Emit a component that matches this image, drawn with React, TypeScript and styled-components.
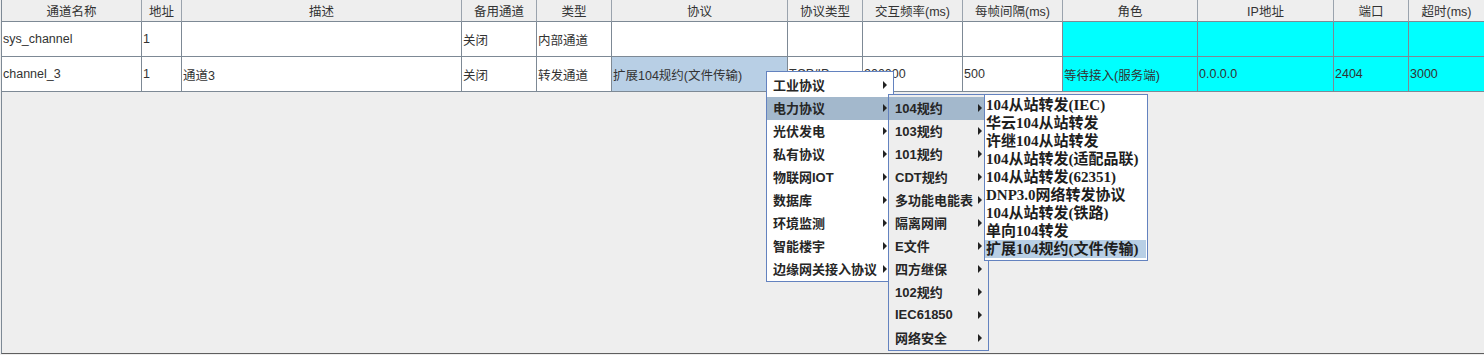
import React from "react";
import styled, { createGlobalStyle } from "styled-components";

const GlobalStyle = createGlobalStyle`
  html, body { margin: 0; padding: 0; background: #eeeeee; }
  * { box-sizing: border-box; }
`;

const Frame = styled.div`
  position: relative;
  width: 1484px;
  height: 355px;
  padding-bottom: 1px;
  background: #eeeeee;
  display: flex;
  flex-direction: column;
  overflow: hidden;
  font-family: "Liberation Sans", "Noto Sans CJK SC", sans-serif;
`;

const ScrollPane = styled.div`
  flex: 1;
  margin-left: 1px;
  border-left: 1px solid #7d8995;
  border-bottom: 1px solid #5e5e5e;
  background: #eeeeee;
`;

const COLS = "140px 40px 280px 75px 75px 176px 75px 100px 100px 135px 136px 75px 75px";

const Grid = styled.div`
  display: grid;
  grid-template-columns: ${COLS};
`;

const HeadCell = styled.div<{ $last?: boolean }>`
  height: 22px;
  background: #eeeeee;
  border-right: ${(p) => (p.$last ? "none" : "1px solid #9aa3ad")};
  border-bottom: 1px solid #7d8995;
  display: flex;
  align-items: center;
  justify-content: center;
  font-size: 12.5px;
  color: #333333;
  white-space: nowrap;
`;

const Cell = styled.div<{ $bg?: string; $last?: boolean }>`
  height: 35px;
  background: ${(p) => p.$bg || "#ffffff"};
  border-right: ${(p) => (p.$last ? "none" : "1px solid #7d8995")};
  border-bottom: 1px solid #7d8995;
  display: flex;
  align-items: center;
  padding-left: 1px;
  font-size: 12.5px;
  color: #333333;
  white-space: nowrap;
  overflow: hidden;
`;

const Menu = styled.div<{ $left: number; $top: number; $width: number; $bg: string }>`
  position: absolute;
  left: ${(p) => p.$left}px;
  top: ${(p) => p.$top}px;
  width: ${(p) => p.$width}px;
  background: ${(p) => p.$bg};
  border: 1px solid #6382bf;
  padding: 2px 0 0 0;
  display: flex;
  flex-direction: column;
`;

const MenuItem = styled.div<{ $active?: boolean }>`
  height: 23px;
  padding: 0 6px 2px 6px;
  display: flex;
  align-items: center;
  justify-content: space-between;
  background: ${(p) => (p.$active ? "#a3b8cc" : "transparent")};
  font-size: 13px;
  font-weight: bold;
  color: #262626;
  white-space: nowrap;
`;

const Arrow = styled.span`
  width: 0;
  height: 0;
  border-left: 4px solid #222;
  border-top: 4px solid transparent;
  border-bottom: 4px solid transparent;
  flex: none;
`;

const LeafMenu = styled.div`
  position: absolute;
  left: 984px;
  top: 94px;
  width: 164px;
  background: #ffffff;
  border: 1px solid #6382bf;
  padding: 1px 1px 2px 0;
  display: flex;
  flex-direction: column;
`;

const LeafItem = styled.div<{ $active?: boolean }>`
  height: 18px;
  line-height: 18px;
  padding-left: 1px;
  background: ${(p) => (p.$active ? "#b8cfe5" : "transparent")};
  font-family: "Liberation Serif", "Noto Sans CJK SC", serif;
  font-size: 15px;
  font-weight: bold;
  color: #1e1e1e;
  white-space: nowrap;
`;

const headers = [
  "通道名称", "地址", "描述", "备用通道", "类型", "协议", "协议类型",
  "交互频率(ms)", "每帧间隔(ms)", "角色", "IP地址", "端口", "超时(ms)",
];

const CYAN = "#00ffff";
const SEL = "#b8cfe5";

const rows: { text: string; bg?: string }[][] = [
  [
    { text: "sys_channel" }, { text: "1" }, { text: "" }, { text: "关闭" },
    { text: "内部通道" }, { text: "" }, { text: "" }, { text: "" }, { text: "" },
    { text: "", bg: CYAN }, { text: "", bg: CYAN }, { text: "", bg: CYAN }, { text: "", bg: CYAN },
  ],
  [
    { text: "channel_3" }, { text: "1" }, { text: "通道3" }, { text: "关闭" },
    { text: "转发通道" }, { text: "扩展104规约(文件传输)", bg: SEL }, { text: "TCP/IP" },
    { text: "200000" }, { text: "500" },
    { text: "等待接入(服务端)", bg: CYAN }, { text: "0.0.0.0", bg: CYAN },
    { text: "2404", bg: CYAN }, { text: "3000", bg: CYAN },
  ],
];

const menu1 = ["工业协议", "电力协议", "光伏发电", "私有协议", "物联网IOT", "数据库", "环境监测", "智能楼宇", "边缘网关接入协议"];
const menu2 = ["104规约", "103规约", "101规约", "CDT规约", "多功能电能表", "隔离网闸", "E文件", "四方继保", "102规约", "IEC61850", "网络安全"];
const menu3 = [
  "104从站转发(IEC)", "华云104从站转发", "许继104从站转发", "104从站转发(适配品联)",
  "104从站转发(62351)", "DNP3.0网络转发协议", "104从站转发(铁路)", "单向104转发", "扩展104规约(文件传输)",
];

export default function App() {
  return (
    <>
      <GlobalStyle />
      <Frame>
        <ScrollPane>
          <Grid>
            {headers.map((h, i) => (
              <HeadCell key={h} $last={i === headers.length - 1}>{h}</HeadCell>
            ))}
            {rows.map((r, ri) =>
              r.map((c, ci) => (
                <Cell key={`${ri}-${ci}`} $bg={c.bg} $last={ci === r.length - 1}>
                  {c.text}
                </Cell>
              ))
            )}
          </Grid>
        </ScrollPane>

        <Menu $left={766} $top={71} $width={128} $bg="#ffffff">
          {menu1.map((m, i) => (
            <MenuItem key={m} $active={i === 1}>
              <span>{m}</span>
              <Arrow />
            </MenuItem>
          ))}
        </Menu>

        <Menu $left={888} $top={94} $width={101} $bg="#eeeeee">
          {menu2.map((m, i) => (
            <MenuItem key={m} $active={i === 0}>
              <span>{m}</span>
              <Arrow />
            </MenuItem>
          ))}
        </Menu>

        <LeafMenu>
          {menu3.map((m, i) => (
            <LeafItem key={m} $active={i === menu3.length - 1}>{m}</LeafItem>
          ))}
        </LeafMenu>
      </Frame>
    </>
  );
}
